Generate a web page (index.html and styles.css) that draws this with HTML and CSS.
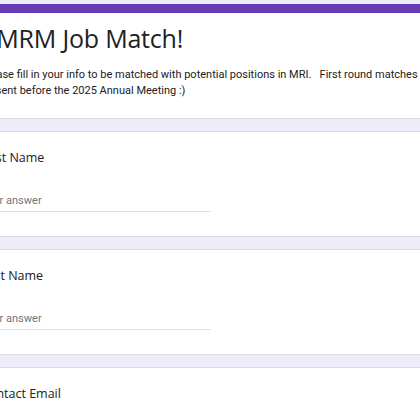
FILE: index.html
```html
<!DOCTYPE html>
<html>
<head>
<meta charset="utf-8">
<link rel="stylesheet" href="styles.css">
</head>
<body>
<div class="form">
  <div class="card header-card">
    <h1 class="form-title">ISMRM Job Match!</h1>
    <p class="form-desc">Please fill in your info to be matched with potential positions in MRI.   First round matches will
be sent before the 2025 Annual Meeting :)</p>
  </div>
  <div class="card q-card">
    <div class="q-title">First Name</div>
    <div class="q-input">Your answer</div>
  </div>
  <div class="card q-card">
    <div class="q-title">Last Name</div>
    <div class="q-input">Your answer</div>
  </div>
  <div class="card q-card">
    <div class="q-title">Contact Email</div>
    <div class="q-input">Your answer</div>
  </div>
</div>
</body>
</html>
```
FILE: styles.css
```css
html, body {
  margin: 0;
  padding: 0;
  overflow: hidden;
  background: #f0ebf8;
  height: 420px;
}
.form {
  margin-left: -38px;
  width: 496px;
  padding-top: 4px;
  display: flex;
  flex-direction: column;
  gap: 12px;
}
.card {
  background: #fff;
  border: 1px solid #dadce0;
  border-radius: 6px;
  box-sizing: border-box;
  padding: 0 18px;
}
.header-card {
  border-top: 9px solid #673ab7;
  height: 115px;
  padding-top: 9px;
}
.form-title {
  margin: 0 0 0 -5px;
  font-family: "Open Sans", sans-serif;
  font-weight: 400;
  font-size: 25px;
  line-height: 32px;
  color: #202124;
  letter-spacing: -0.2px;
}
.form-desc {
  margin: 13px 0 0;
  font-family: Roboto, sans-serif;
  font-size: 11px;
  line-height: 16px;
  color: #202124;
  white-space: pre;
}
.q-card {
  height: 106px;
  padding-top: 17px;
}
.q-title {
  font-family: "Open Sans", sans-serif;
  font-size: 12.5px;
  line-height: 18px;
  color: #202124;
}
.q-input {
  margin-top: 26px;
  width: 230px;
  font-family: Roboto, sans-serif;
  font-size: 11px;
  line-height: 16px;
  color: #70757a;
  padding-bottom: 2px;
  border-bottom: 1px solid #e0e0e0;
}
```
